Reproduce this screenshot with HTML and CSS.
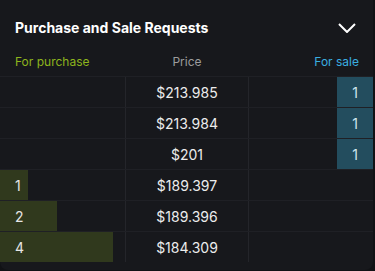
FILE: index.html
```html
<!DOCTYPE html>
<html lang="en">
<head>
    <meta charset="UTF-8">
    <meta name="viewport" content="width=device-width, initial-scale=1.0">
    <title>Order Book</title>
    <link rel="stylesheet" href="styles.css">
</head>
<body>

    <div class="card">
        <div class="card-head">
            <h2>Purchase and Sale Requests</h2>
            <svg class="chevron" width="18" height="10" viewBox="0 0 18 10">
                <path d="M1 1 L9 9 L17 1" fill="none" stroke="#fff" stroke-width="2"/>
            </svg>
        </div>

        <div class="cols">
            <span class="buy-title">For purchase</span>
            <span class="price-title">Price</span>
            <span class="sell-title">For sale</span>
        </div>

        <div class="book" id="book"></div>
    </div>

    <script>
        const rows = [
            { buy: 0, price: "$213.985", sell: 1 },
            { buy: 0, price: "$213.984", sell: 1 },
            { buy: 0, price: "$201", sell: 1 },
            { buy: 1, price: "$189.397", sell: 0 },
            { buy: 2, price: "$189.396", sell: 0 },
            { buy: 4, price: "$184.309", sell: 0 }
        ];

        const book = document.getElementById("book");
        rows.forEach(row => {
            const buyBar = row.buy ? `<div class="bar buy-bar" style="width:${row.buy * 28.25}px">${row.buy}</div>` : "";
            const sellBar = row.sell ? `<div class="bar sell-bar" style="width:${row.sell * 36}px">${row.sell}</div>` : "";
            book.innerHTML += `
                <div class="row">
                    <div class="cell buy">${buyBar}</div>
                    <div class="cell price">${row.price}</div>
                    <div class="cell sell">${sellBar}</div>
                </div>
            `;
        });
    </script>

</body>
</html>
```

FILE: styles.css
```css
body {
    font-family: Inter, "Noto Sans", sans-serif;
    background-color: #111215;
    margin: 0;
    width: 375px;
    height: 271px;
    overflow: hidden;
}
.card {
    width: 373px;
    background: #17181c;
    border-radius: 0 0 8px 8px;
    padding-bottom: 8px;
    margin-top: -8px;
    padding-top: 8px;
    border-top-right-radius: 8px;
}
.card-head {
    display: flex;
    align-items: center;
    justify-content: space-between;
    height: 38px;
    padding: 8px 17px 0 15px;
}
.card-head h2 {
    margin: 0;
    font-size: 14px;
    font-weight: 700;
    color: #ffffff;
}
.chevron {
    margin-top: 1px;
}
.cols {
    display: grid;
    grid-template-columns: 1fr 1fr 1fr;
    padding: 0 14px 0 15px;
    height: 30px;
    align-items: center;
    font-size: 12px;
}
.buy-title {
    color: #8db41c;
}
.price-title {
    color: #9c9c9c;
    text-align: center;
}
.sell-title {
    color: #3aaee0;
    text-align: right;
}
.book {
    border-top: 1px solid #1f2025;
}
.row {
    display: grid;
    grid-template-columns: 125px 124px 124px;
    height: 30px;
    border-bottom: 1px solid #1f2025;
}
.row:last-child {
    border-bottom: none;
}
.cell {
    display: flex;
    align-items: stretch;
}
.price {
    border-left: 1px solid #24252a;
    border-right: 1px solid #24252a;
    justify-content: center;
    align-items: center;
    color: #ececec;
    font-size: 14px;
}
.sell {
    justify-content: flex-end;
}
.bar {
    display: flex;
    align-items: center;
    font-size: 14px;
    color: #e6e6e6;
}
.buy-bar {
    background: #30391d;
    padding-left: 15px;
    box-sizing: border-box;
}
.sell-bar {
    background: #234d5e;
    justify-content: center;
    color: #cfe6ef;
}
```
